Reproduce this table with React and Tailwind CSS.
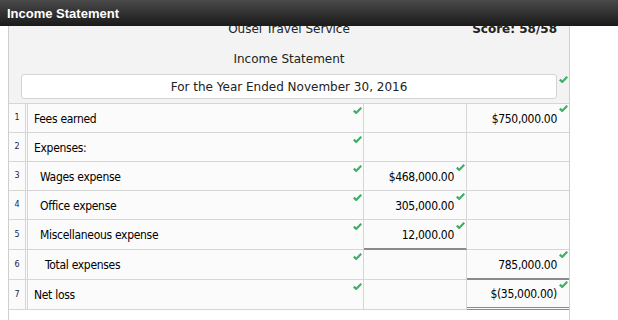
import React from "react";

// small green tick shown at the top-right of graded cells
function Check({ className = "" }) {
  return (
    <svg
      viewBox="0 0 9 7"
      className={"absolute w-[9px] h-[7px] " + className}
      fill="none"
    >
      <path
        d="M0.8 3.6 L3.2 5.9 L8.3 0.7"
        stroke="#3fae68"
        strokeWidth="2.2"
        strokeLinecap="butt"
        strokeLinejoin="miter"
      />
    </svg>
  );
}

const rows = [
  { n: 1, label: "Fees earned", indent: "pl-[6px]", c2: "", c3: "$750,000.00", h: "h-[29px]" },
  { n: 2, label: "Expenses:", indent: "pl-[6px]", c2: null, c3: null, h: "h-[29px]" },
  { n: 3, label: "Wages expense", indent: "pl-[12px]", c2: "$468,000.00", c3: null, h: "h-[29px]" },
  { n: 4, label: "Office expense", indent: "pl-[12px]", c2: "305,000.00", c3: null, h: "h-[29px]" },
  { n: 5, label: "Miscellaneous expense", indent: "pl-[12px]", c2: "12,000.00", c3: null, h: "h-[30px]", c2Line: "border-b-2 border-b-[#8a8a8a]" },
  { n: 6, label: "Total expenses", indent: "pl-[17px]", c2: null, c3: "785,000.00", h: "h-[30px]", c3Line: "border-b-2 border-b-[#8a8a8a]" },
  { n: 7, label: "Net loss", indent: "pl-[6px]", c2: null, c3: "$(35,000.00)", h: "h-[30px]", c3Line: "border-b-[3px] border-b-[#8a8a8a]" },
];

const narrow = { fontFamily: '"DejaVu Sans Condensed", "Liberation Sans", sans-serif' };
const verdana = { fontFamily: '"DejaVu Sans", Verdana, sans-serif' };

export default function App() {
  return (
    <div className="relative w-[618px] h-[320px] overflow-hidden bg-white">
      {/* barra superior */}
      <div
        className="absolute top-0 left-0 right-0 z-10 h-[26px] bg-gradient-to-b from-[#4a4a4a] to-[#1b1b1b] flex items-center px-[7px]"
        style={{ fontFamily: '"Liberation Sans", Arial, sans-serif' }}
      >
        <span className="text-white font-bold text-[13px] leading-none">Income Statement</span>
      </div>

      {/* panel */}
      <div className="ml-[8px] w-[562px] h-[320px] border-l border-r border-[#cfcfcf] bg-white">
        <div className="bg-[#f3f3f3] px-[12px] pt-[21px] pb-[4px] text-[12px] leading-[16px] text-[#222]" style={verdana}>
          <div className="grid grid-cols-[1fr_auto_1fr]">
            <div />
            <div>Ousel Travel Service</div>
            <div className="text-right font-bold">Score: 58/58</div>
          </div>
          <div className="text-center mt-[14px]">Income Statement</div>
          <div className="relative mt-[7px] h-[25px] bg-white border border-[#d4d4d4] rounded-[3px] text-center pt-[4px]">
            For the Year Ended November 30, 2016
            <Check className="right-[-12px] top-[1px]" />
          </div>
        </div>

        {/* tabla */}
        <div className="grid grid-cols-[16px_339px_103px_102px] border-t border-[#d6d6d6] bg-[#fbfbfb] text-[12px] tracking-[-0.3px] text-black" style={narrow}>
          {rows.map((r) => (
            <React.Fragment key={r.n}>
              <div className={`${r.h} border-b border-[#d6d6d6] flex items-center justify-center text-[8px] tracking-normal text-[#1c1c4a]`} style={verdana}>
                {r.n}
              </div>
              <div className={`${r.h} relative border-b border-r border-l-[3px] border-double border-[#d6d6d6] flex items-center ${r.indent}`}>
                <span className="pt-[1px]">{r.label}</span>
                <Check className="right-[1px] top-[3px]" />
              </div>
              <div className={`${r.h} relative border-b border-r border-[#d6d6d6] ${r.c2Line || ""} flex items-center justify-end pr-[12px]`}>
                {r.c2 && (
                  <>
                    <span className="pt-[1px]">{r.c2}</span>
                    <Check className="right-[1px] top-[2px]" />
                  </>
                )}
              </div>
              <div className={`${r.h} relative border-b border-double border-[#d6d6d6] ${r.c3Line || ""} flex items-center justify-end pr-[12px]`}>
                {r.c3 && (
                  <>
                    <span className="pt-[1px]">{r.c3}</span>
                    <Check className="right-[1px] top-[1px]" />
                  </>
                )}
              </div>
            </React.Fragment>
          ))}
        </div>
      </div>
    </div>
  );
}
